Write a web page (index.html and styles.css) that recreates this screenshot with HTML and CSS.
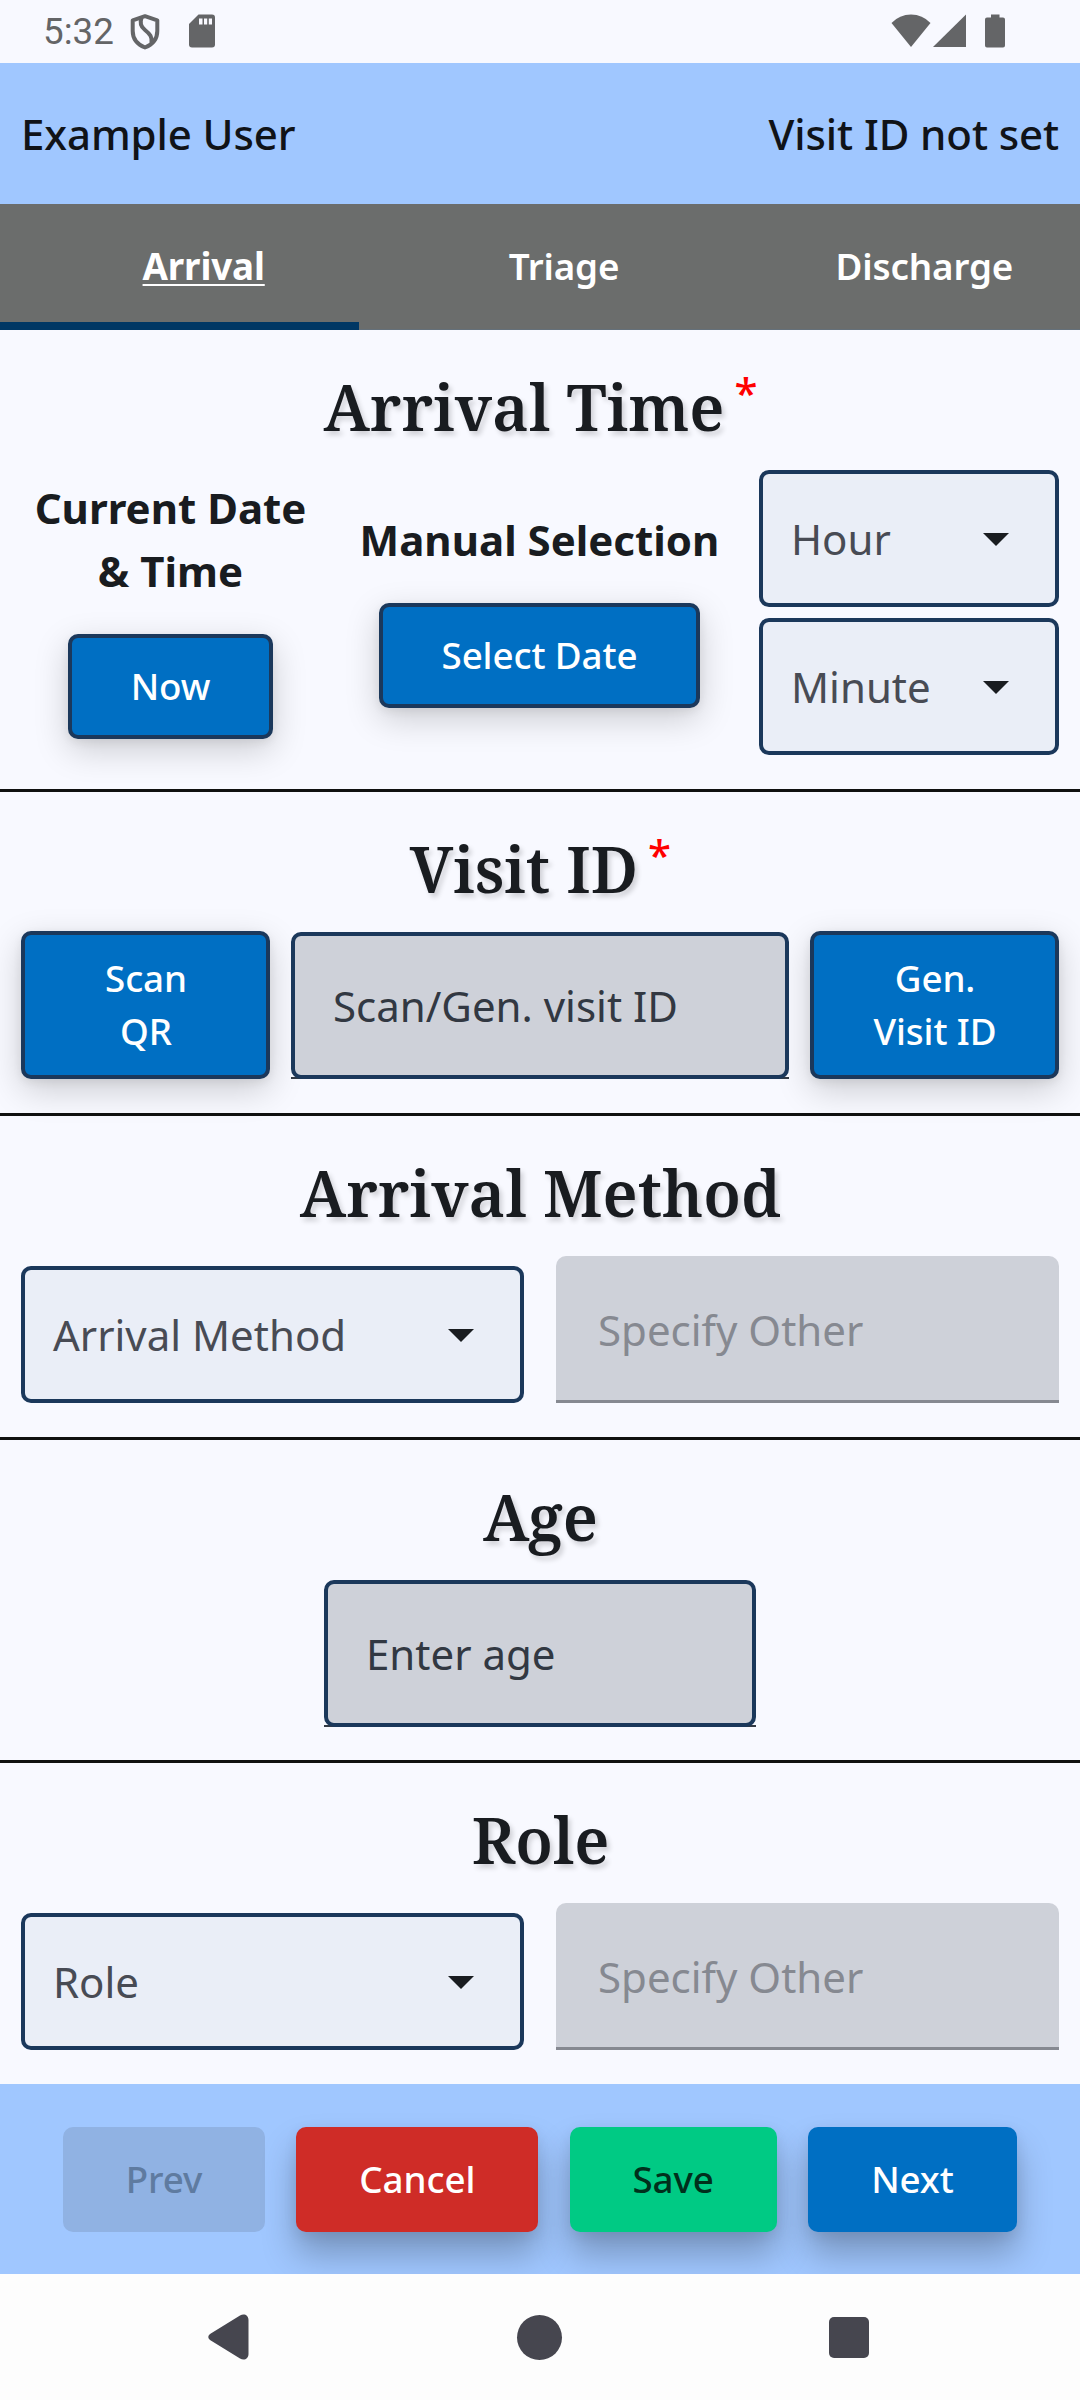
FILE: index.html
```html
<!DOCTYPE html>
<html lang="en">
<head>
<meta charset="utf-8">
<title>Arrival</title>
<link rel="stylesheet" href="styles.css">
</head>
<body>
<div class="status">
  <span class="clock">5:32</span>
  <svg class="ic-shield" width="30" height="36" viewBox="0 0 30 36" fill="none" stroke="#646567" stroke-width="4" stroke-linejoin="round"><path d="M15 2.2L27.3 6.3V17C27.3 24.500 22.500 30.500 15 33.500C7.500 30.500 2.700 24.500 2.700 17V6.300Z"/><path d="M11.500 4C9.500 9 10.500 12.500 15 16C20 20 22.500 23 21.500 29"/></svg>
  <svg class="ic-sd" width="26" height="34" viewBox="0 0 26 34"><path fill="#646567" d="M9.500 0.500H23Q26 0.500 26 3.500V30.500Q26 33.500 23 33.500H3Q0 33.500 0 30.500V10Z"/><path fill="#f9f9ff" d="M10 4.500h3.500v6h-3.500zM15 4.500h3.200v6h-3.200zM19.800 4.500h3.200v6h-3.200z"/></svg>
  <span class="spacer"></span>
  <svg class="ic-wifi" width="40" height="34" viewBox="0 0 40 34"><path fill="#646567" d="M0.500 9Q8.500 0.500 20 0.500T39.500 9L20 33Z"/></svg>
  <svg class="ic-signal" width="33" height="34" viewBox="0 0 33 34"><path fill="#646567" d="M33 0.500V33H0Z"/></svg>
  <svg class="ic-battery" width="20" height="34" viewBox="0 0 20 34"><path fill="#646567" d="M6 0.500h8.500v3H18q2 0 2 2V31.500q0 2-2 2H2q-2 0-2-2V5.500q0-2 2-2H6z"/></svg>
</div>
<header class="topbar"><span>Example User</span><span>Visit ID not set</span></header>
<nav class="tabs">
  <div class="tab active"><span>Arrival</span></div>
  <div class="tab"><span>Triage</span></div>
  <div class="tab"><span>Discharge</span></div>
</nav>
<main>
  <section class="card time">
    <div class="title"><h2>Arrival Time</h2><span class="req">*</span></div>
    <div class="row time-row">
      <div class="col current">
        <p class="label">Current Date<br>&amp; Time</p>
        <div class="btn now">Now</div>
      </div>
      <div class="col manual">
        <p class="label">Manual Selection</p>
        <div class="btn date">Select Date</div>
      </div>
      <div class="selects">
        <div class="select"><span>Hour</span><svg width="26" height="13" viewBox="0 0 26 13"><path d="M0 0H26L13 13Z"/></svg></div>
        <div class="select"><span>Minute</span><svg width="26" height="13" viewBox="0 0 26 13"><path d="M0 0H26L13 13Z"/></svg></div>
      </div>
    </div>
  </section>
  <section class="card">
    <div class="title"><h2>Visit ID</h2><span class="req">*</span></div>
    <div class="row visit-row">
      <div class="btn tall">Scan<br>QR</div>
      <div class="input outlined visit"><span>Scan/Gen. visit ID</span></div>
      <div class="btn tall">Gen.<br>Visit ID</div>
    </div>
  </section>
  <section class="card">
    <div class="title"><h2>Arrival Method</h2></div>
    <div class="row pair">
      <div class="select"><span>Arrival Method</span><svg width="26" height="13" viewBox="0 0 26 13"><path d="M0 0H26L13 13Z"/></svg></div>
      <div class="input disabled"><span>Specify Other</span></div>
    </div>
  </section>
  <section class="card age">
    <div class="title"><h2>Age</h2></div>
    <div class="row center">
      <div class="input outlined"><span>Enter age</span></div>
    </div>
  </section>
  <section class="card last">
    <div class="title"><h2>Role</h2></div>
    <div class="row pair">
      <div class="select"><span>Role</span><svg width="26" height="13" viewBox="0 0 26 13"><path d="M0 0H26L13 13Z"/></svg></div>
      <div class="input disabled"><span>Specify Other</span></div>
    </div>
  </section>
</main>
<footer class="actions">
  <div class="act prev">Prev</div>
  <div class="act cancel">Cancel</div>
  <div class="act save">Save</div>
  <div class="act next">Next</div>
</footer>
<div class="sysnav">
  <svg class="nav-back" width="41" height="46" viewBox="0 0 41 46"><path fill="#46464f" d="M32 1.500C36 -1 40.500 1 40.500 6V40C40.500 45 36 47 32 44.500L2 26Q-1.500 23 2 20Z"/></svg>
  <span class="nav-home"></span>
  <span class="nav-recent"></span>
</div>
</body>
</html>
```
FILE: styles.css
```css
* { box-sizing: border-box; }
body {
  margin: 0;
  width: 1080px;
  height: 2400px;
  overflow: hidden;
  background: #f8f9ff;
  color: #191c20;
  font: 42px/63px "Noto Sans", sans-serif;
}
h2, p { margin: 0; }
svg { display: block; flex: none; }

.status { height: 63px; display: flex; align-items: flex-start; padding: 0 75px 0 43px; }
.clock { font: 36.75px/43px Roboto, sans-serif; color: #646567; margin-top: 10px; width: 87px; }
.spacer { flex: 1; }
.ic-shield { margin-top: 14px; }
.ic-sd { margin: 14px 0 0 29px; }
.ic-wifi { margin-top: 14px; }
.ic-signal { margin: 14px 0 0 2px; }
.ic-battery { margin: 14px 0 0 19px; }

.topbar {
  height: 141px;
  padding: 0 21px;
  background: #a0c7ff;
  color: #101318;
  font-weight: 500;
  letter-spacing: -0.1px;
  display: flex;
  justify-content: space-between;
  align-items: center;
}

.tabs { height: 126px; background: #6b6d6c; display: flex; border-bottom: 1px solid #64707a; }
.tab {
  flex: 1;
  height: 126px;
  padding: 0 0 2px 49px;
  display: flex;
  align-items: center;
  justify-content: center;
  color: #fff;
  font-weight: 600;
  font-size: 36.75px;
  letter-spacing: -0.15px;
}
.tab.active { font-weight: 700; border-bottom: 8px solid #003764; padding: 6px 0 0 48px; }
.tab.active span { text-decoration: underline; text-decoration-thickness: 2px; text-underline-offset: 4px; }

.card {
  height: 324px;
  padding: 34px 21px 34px;
  border-bottom: 3px solid #101110;
  display: flex;
  flex-direction: column;
  justify-content: space-between;
}
.card.time { height: 462px; }
.card.age { height: 323px; padding-bottom: 33px; }
.card.last { height: 321px; border-bottom: 0; }

.title { height: 86px; display: flex; justify-content: center; padding-left: 1px; }
h2 {
  font: 600 63px/86px "Noto Serif", "DejaVu Serif", serif;
  text-shadow: 3px 4px 5px rgba(0, 0, 0, 0.16);
}
.req { color: #f00; font-weight: 500; margin-left: 10px; line-height: 57px; }

.row { display: flex; align-items: flex-end; }
.time-row { align-items: center; }
.col { display: flex; flex-direction: column; align-items: center; text-align: center; padding-bottom: 10px; }
.current { width: 298px; }
.manual { width: 440px; }
.label { font-weight: 700; margin-bottom: 32px; padding-left: 1px; white-space: nowrap; }
.selects { width: 300px; display: flex; flex-direction: column; gap: 11px; }

.btn {
  height: 105px;
  border: 4px solid #1b385b;
  border-radius: 10px;
  background: #006fc3;
  color: #fff;
  font-weight: 500;
  font-size: 36.75px;
  line-height: 53px;
  letter-spacing: -0.1px;
  padding-left: 1px;
  text-align: center;
  display: flex;
  align-items: center;
  justify-content: center;
  box-shadow: 0 11px 34px rgba(0, 0, 0, 0.18), 0 3px 10px rgba(0, 0, 0, 0.07);
}
.now { width: 205px; }
.date { width: 321px; }
.tall { width: 249px; height: 148px; }
.visit-row { justify-content: space-between; }

.select {
  height: 137px;
  border: 4px solid #1b385b;
  border-radius: 10px;
  background: #eaeef7;
  color: #484b54;
  padding: 0 46px 0 28px;
  display: flex;
  align-items: center;
  justify-content: space-between;
}
.select svg { fill: #191c20; margin-top: 2px; }

.input { height: 147px; background: #ced1d9; display: flex; align-items: center; padding: 2px 42px 0; }
.outlined { color: #323842; border-bottom: 2px solid #333a44; border-radius: 0; position: relative; background: #f8f9ff; }
.outlined::before {
  content: "";
  position: absolute;
  inset: 0 0 -2px;
  border: 4px solid #1b385b;
  border-radius: 10px;
  background: #ced1d9;
}
.outlined span { position: relative; }
.visit { width: 498px; }
.age .input { width: 432px; }
.center { justify-content: center; }
.pair { justify-content: space-between; }
.pair .select, .pair .input { width: 503px; }
.disabled { color: #868991; border-bottom: 3px solid #868991; border-radius: 10px 10px 0 0; }

.actions {
  height: 190px;
  background: #a0c7ff;
  display: flex;
  padding: 43px 0 0 63px;
  gap: 31.3px;
  overflow: hidden;
}
.act {
  height: 105px;
  border-radius: 10px;
  font-weight: 500;
  font-size: 36.75px;
  letter-spacing: -0.1px;
  color: #fff;
  display: flex;
  align-items: center;
  justify-content: center;
  box-shadow: 0 22px 34px rgba(0, 0, 0, 0.25), 0 4px 14px rgba(0, 0, 0, 0.07);
}
.prev { width: 202px; background: #90b2e3; color: #5f7ba0; box-shadow: none; }
.cancel { width: 242px; background: #cf2c27; }
.save { width: 207px; background: #00ca84; color: #00301c; }
.next { width: 209px; background: #006fc3; }

.sysnav { height: 126px; background: #fdfdfd; display: flex; align-items: center; }
.nav-back { margin-left: 208px; }
.nav-home { width: 45px; height: 45px; border-radius: 50%; background: #46464f; margin-left: 268px; }
.nav-recent { width: 40px; height: 41px; border-radius: 5px; background: #46464f; margin-left: 267px; }
```
